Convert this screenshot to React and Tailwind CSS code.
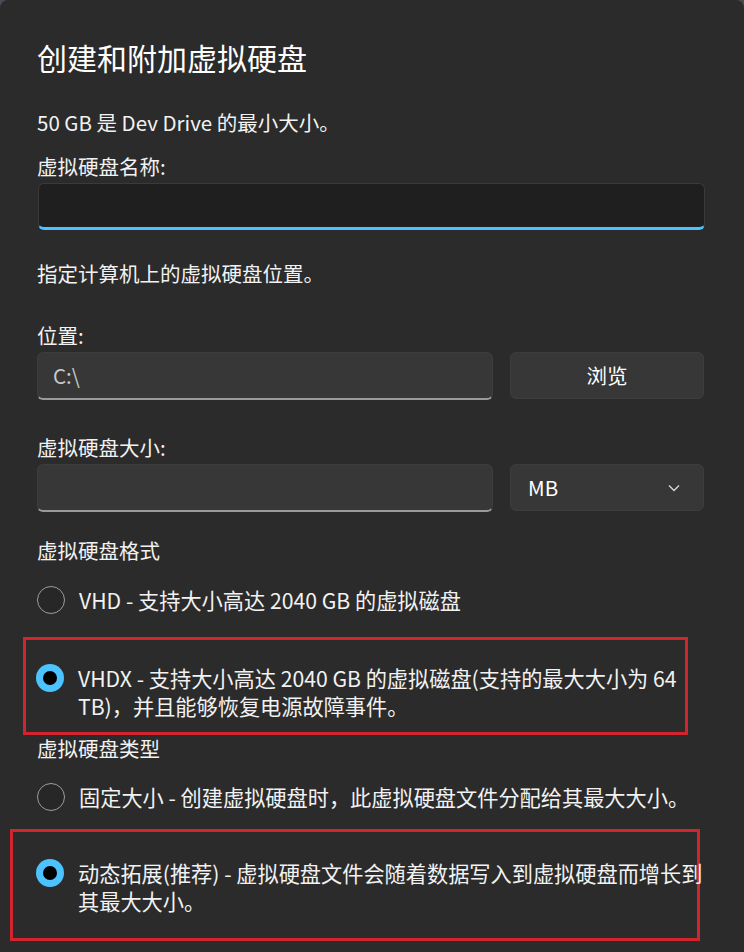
import React from 'react';

const font = { fontFamily: '"Noto Sans CJK SC", "Noto Sans", sans-serif' };

function Radio({ checked }) {
  if (checked) {
    return (
      <span className="w-[28px] h-[28px] shrink-0 rounded-full bg-[#4cc2ff] flex items-center justify-center">
        <span className="w-[14px] h-[14px] rounded-full bg-black" />
      </span>
    );
  }
  return <span className="w-[28px] h-[28px] shrink-0 rounded-full border-[1.5px] border-[#9d9d9d] bg-[#272727]" />;
}

function Option({ checked, children }) {
  return (
    <div className="flex items-start gap-[14px]">
      <Radio checked={checked} />
      <div className="text-[21.2px] leading-[28px] text-[#f2f2f2] whitespace-nowrap">{children}</div>
    </div>
  );
}

export default function App() {
  return (
    <div className="min-h-[952px] bg-[#4a4a55]" style={font}>
      <div className="min-h-[952px] bg-[#2b2b2b] rounded-t-[8px] pl-[37px] pr-[39px] pt-[37px] text-[#f2f2f2]">
        {/* Title */}
        <h1 className="text-[30px] leading-[40px] text-white">创建和附加虚拟硬盘</h1>

        <p className="mt-[31px] text-[20.5px] leading-[28px]">50 GB 是 Dev Drive 的最小大小。</p>

        <p className="mt-[16px] text-[20.5px] leading-[28px]">虚拟硬盘名称:</p>
        <div className="mt-[3px] h-[47px] w-[667px] ml-px rounded-[6px] bg-[#1f1f1f] border border-[#3a3a3a] border-b-[3px] border-b-[#4cc2ff]" />

        <p className="mt-[29px] text-[20.5px] leading-[28px]">指定计算机上的虚拟硬盘位置。</p>

        <p className="mt-[34px] text-[20.5px] leading-[28px]">位置:</p>
        <div className="mt-[3px] flex gap-[17px]">
          <div className="h-[48px] w-[456px] rounded-[6px] bg-[#373737] border border-[#3d3d3d] border-b-[2px] border-b-[#9a9a9a] flex items-center px-[15px] text-[20.5px] text-[#c8c8c8]">
            C:\
          </div>
          <button className="h-[47px] w-[194px] rounded-[6px] bg-[#373737] border border-[#3d3d3d] text-[20.5px] text-white">
            浏览
          </button>
        </div>

        <p className="mt-[33px] text-[20.5px] leading-[28px]">虚拟硬盘大小:</p>
        <div className="mt-[3px] flex gap-[17px]">
          <div className="h-[48px] w-[456px] rounded-[6px] bg-[#373737] border border-[#3d3d3d] border-b-[2px] border-b-[#9a9a9a]" />
          <div className="h-[47px] w-[194px] rounded-[6px] bg-[#373737] border border-[#3d3d3d] flex items-center justify-between pl-[17px] pr-[23px] text-[20.5px] text-white">
            <span>MB</span>
            <svg width="12" height="8" viewBox="0 0 12 8" fill="none">
              <path d="M1 1.5 L6 6.5 L11 1.5" stroke="#d8d8d8" strokeWidth="1.3" />
            </svg>
          </div>
        </div>

        <p className="mt-[24px] text-[20.5px] leading-[28px]">虚拟硬盘格式</p>
        <div className="mt-[22px]">
          <Option>VHD - 支持大小高达 2040 GB 的虚拟磁盘</Option>
        </div>

        <div className="mt-[23px] ml-[-14px] w-[665px] h-[98px] border-[3px] border-[#d1242c] pt-[24px] pl-[10px]">
          <Option checked>
            VHDX - 支持大小高达 2040 GB 的虚拟磁盘(支持的最大大小为 64
            <br />
            TB)，并且能够恢复电源故障事件。
          </Option>
        </div>

        <p className="mt-[-1px] text-[20.5px] leading-[28px]">虚拟硬盘类型</p>
        <div className="mt-[21px]">
          <Option>固定大小 - 创建虚拟硬盘时，此虚拟硬盘文件分配给其最大大小。</Option>
        </div>

        <div className="mt-[18px] ml-[-27px] w-[690px] h-[112px] border-[3px] border-[#d1242c] pt-[27px] pl-[23px]">
          <Option checked>
            动态拓展(推荐) - 虚拟硬盘文件会随着数据写入到虚拟硬盘而增长到
            <br />
            其最大大小。
          </Option>
        </div>
      </div>
    </div>
  );
}
